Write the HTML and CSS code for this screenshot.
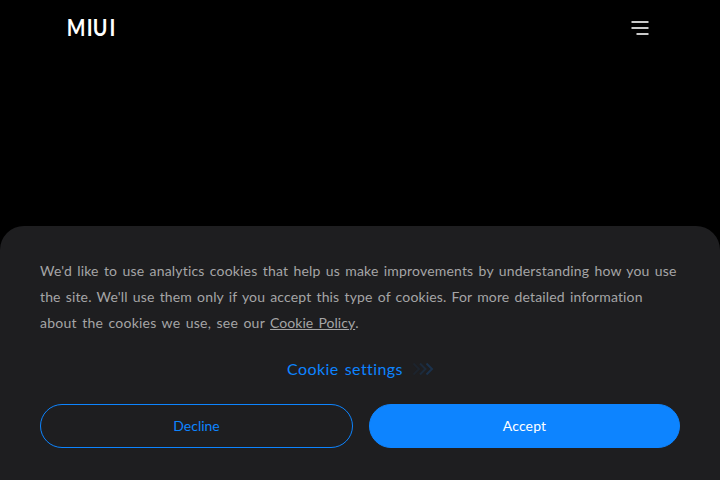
FILE: index.html
```html
<!DOCTYPE html>
<html lang="en">
<head>
<meta charset="utf-8">
<title>MIUI</title>
<link rel="stylesheet" href="styles.css">
</head>
<body>
<header class="header">
  <svg class="logo" width="54" height="32" viewBox="0 0 54 32"><text transform="scale(.9 1)" x="3.2 25.3 31.9 50.7" y="24">MIUI</text></svg>
  <svg class="menu" width="18" height="16" viewBox="0 0 18 16"><path d="M0.5 2H17.5M0.5 8H17.5M5.5 14H17.5"/></svg>
</header>
<section class="cookie-panel">
  <p class="notice">
    <span class="line line-1">We'd like to use analytics cookies that help us make improvements by understanding how you use</span>
    <span class="line line-2">the site. We'll use them only if you accept this type of cookies. For more detailed information</span>
    <span class="line line-3">about the cookies we use, see our <a class="policy">Cookie Policy</a>.</span>
  </p>
  <a class="settings"><span class="settings-label">Cookie settings</span>
    <svg class="arrows" width="22" height="16" viewBox="0 0 22 16"><path class="a1" d="M1.5 2.5L7 8L1.5 13.5"/><path class="a2" d="M8 2.5L13.5 8L8 13.5"/><path class="a3" d="M14.5 2.5L20 8L14.5 13.5"/></svg>
  </a>
  <div class="actions">
    <button class="button decline">Decline</button>
    <button class="button accept">Accept</button>
  </div>
</section>
</body>
</html>
```
FILE: styles.css
```css
* { box-sizing: border-box; }
body {
  margin: 0;
  height: 480px;
  display: flex;
  flex-direction: column;
  justify-content: space-between;
  overflow: hidden;
  background: #000;
  font-family: Lato, sans-serif;
}
.header {
  display: flex;
  align-items: center;
  justify-content: space-between;
  height: 56px;
  padding: 0 71px 0 64px;
}
.logo { fill: #fff; font-size: 22px; font-weight: 700; overflow: visible; }
.menu { fill: none; stroke: #c9c9c9; stroke-width: 2; }
.cookie-panel {
  height: 254px;
  padding: 32px 40px 0;
  border-radius: 24px 24px 0 0;
  background: #1e1e20;
}
.notice {
  margin: 0;
  color: #a5a5a6;
  font-size: 14px;
  line-height: 26px;
  word-spacing: 1.5px;
}
.line { display: block; width: max-content; white-space: nowrap; }
.line-1 { letter-spacing: .18px; }
.line-2 { letter-spacing: .13px; }
.line-3 { letter-spacing: .25px; }
.policy { text-decoration: underline; letter-spacing: .04px; }
.settings {
  display: flex;
  align-items: center;
  justify-content: center;
  gap: 9px;
  height: 24px;
  margin-top: 21px;
  padding-left: 1px;
  color: #0d84ff;
  font-size: 16px;
  letter-spacing: .42px;
  word-spacing: 1.5px;
}
.settings-label { line-height: 24px; padding-bottom: 1px; }
.arrows { fill: none; stroke: #0d84ff; stroke-width: 2; }
.a1 { opacity: .06; }
.a2 { opacity: .12; }
.a3 { opacity: .2; }
.actions { display: grid; grid-template-columns: 313px 311px; gap: 16px; margin-top: 23px; }
.button {
  height: 44px;
  padding: 0 0 2px;
  border: 1px solid #0d84ff;
  border-radius: 22px;
  background: transparent;
  color: #0d84ff;
  font: 14px Lato, sans-serif;
}
.accept { background: #0d84ff; color: #fff; letter-spacing: .15px; }
```
